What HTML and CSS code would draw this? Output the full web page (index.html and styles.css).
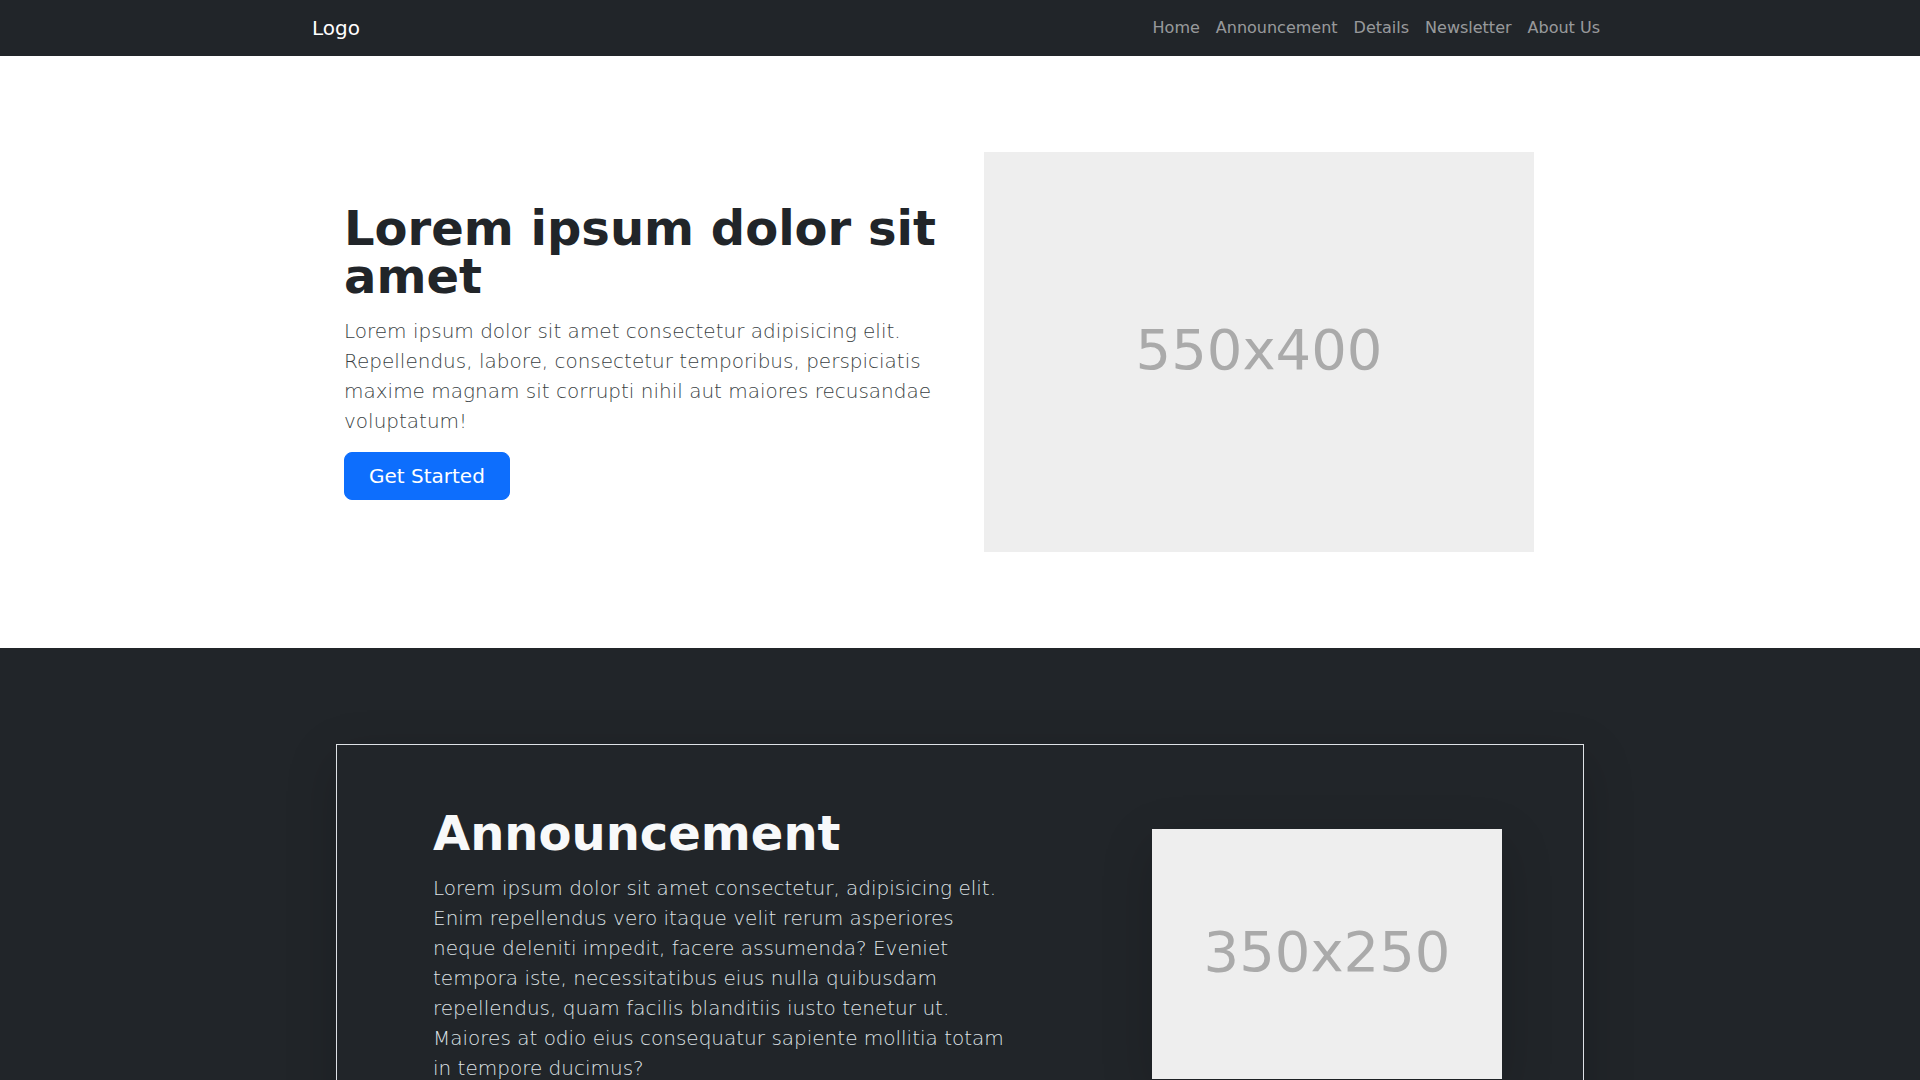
FILE: index.html
```html
<!DOCTYPE html>
<html lang="en">
<head>
<meta charset="utf-8">
<title>Landing</title>
<link rel="stylesheet" href="styles.css">
</head>
<body>
<header class="navbar">
  <div class="nav-inner">
    <a class="brand" href="#">Logo</a>
    <ul class="nav">
      <li><a href="#">Home</a></li>
      <li><a href="#">Announcement</a></li>
      <li><a href="#">Details</a></li>
      <li><a href="#">Newsletter</a></li>
      <li><a href="#">About Us</a></li>
    </ul>
  </div>
</header>

<section class="hero">
  <div class="hero-inner">
    <div class="hero-row">
      <div class="hero-text">
        <h1 class="display">Lorem ipsum dolor sit amet</h1>
        <p class="lead muted">Lorem ipsum dolor sit amet consectetur adipisicing elit. Repellendus, labore, consectetur temporibus, perspiciatis maxime magnam sit corrupti nihil aut maiores recusandae voluptatum!</p>
        <div class="actions">
          <a class="btn" href="#">Get Started</a>
        </div>
      </div>
      <div class="placeholder big">550x400</div>
    </div>
  </div>
</section>

<section class="announce">
  <div class="announce-box">
    <div class="ann-text">
      <h1 class="display light">Announcement</h1>
      <p class="lead ann-lead">Lorem ipsum dolor sit amet consectetur, adipisicing elit. Enim repellendus vero itaque velit rerum asperiores neque deleniti impedit, facere assumenda? Eveniet tempora iste, necessitatibus eius nulla quibusdam repellendus, quam facilis blanditiis iusto tenetur ut. Maiores at odio eius consequatur sapiente mollitia totam in tempore ducimus?</p>
    </div>
    <div class="placeholder small">350x250</div>
  </div>
</section>
</body>
</html>
```

FILE: styles.css
```css
* { box-sizing: border-box; }
html, body { margin: 0; padding: 0; }
body {
  font-family: "DejaVu Sans", sans-serif;
  font-size: 16px;
  line-height: 1.5;
  color: #212529;
  background: #fff;
}
a { text-decoration: none; }

.navbar {
  background: #212529;
  padding: 8px 0;
}
.nav-inner {
  max-width: 1320px;
  margin: 0 auto;
  padding: 0 12px;
  display: flex;
  align-items: center;
  justify-content: space-between;
}
.brand {
  color: #fff;
  font-size: 20px;
  line-height: 30px;
  padding: 5px 0;
}
.nav {
  list-style: none;
  margin: 0;
  padding: 0;
  display: flex;
}
.nav a {
  display: block;
  padding: 8px;
  color: rgba(255, 255, 255, 0.55);
  font-size: 16px;
  line-height: 24px;
}

.hero-inner {
  width: 1280px;
  margin: 0 auto;
  padding: 48px 24px;
}
.hero-row {
  display: grid;
  grid-template-columns: 1fr 1fr;
  column-gap: 48px;
  align-items: center;
  padding: 48px 0;
}
.display {
  font-size: 48px;
  font-weight: 700;
  line-height: 1;
  margin: 0 0 16px;
}
.lead {
  font-size: 20px;
  font-weight: 300;
  line-height: 30px;
  margin: 0 0 16px;
}
.muted { color: #3a3f44; }
.actions { display: flex; }
.btn {
  display: inline-block;
  background: #0d6efd;
  border: 1px solid #0d6efd;
  color: #fff;
  font-size: 20px;
  line-height: 30px;
  padding: 8px 24px;
  border-radius: 8px;
}

.placeholder {
  background: #eeeeee;
  color: #aaaaaa;
  display: flex;
  align-items: center;
  justify-content: center;
  font-size: 56px;
  line-height: 1;
  padding-bottom: 4px;
}
.placeholder.big { width: 550px; height: 400px; }
.placeholder.small {
  width: 350px;
  height: 250px;
  flex: none;
  box-shadow: 0 16px 48px rgba(0, 0, 0, 0.175);
}

.announce {
  background: #212529;
  padding-top: 96px;
  padding-bottom: 96px;
}
.announce-box {
  width: 1248px;
  margin: 0 auto;
  border: 1px solid #dee2e6;
  box-shadow: 0 16px 48px rgba(0, 0, 0, 0.175);
  padding: 64px 81px 64px 96px;
  display: flex;
  align-items: center;
  justify-content: space-between;
}
.ann-text { width: 580px; }
.light { color: #f8f9fa; }
.ann-lead { color: #dee2e6; }
```
